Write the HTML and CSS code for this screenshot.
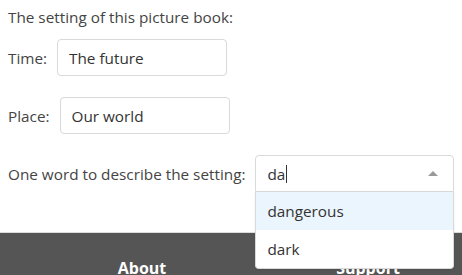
FILE: index.html
```html
<!DOCTYPE html>
<html lang="en">
<head>
    <meta charset="UTF-8">
    <title>Picture book setting</title>
    <link rel="stylesheet" href="styles.css">
</head>
<body>
    <div class="form">
        <p class="intro">The setting of this picture book:</p>
        <div class="row">
            <label for="time-input">Time:</label>
            <input type="text" id="time-input" class="text-input" value="The future">
        </div>
        <div class="row">
            <label for="place-input">Place:</label>
            <input type="text" id="place-input" class="text-input" value="Our world">
        </div>
        <div class="row">
            <label for="word-input">One word to describe the setting:</label>
            <div class="combo">
                <div class="combo-box" id="word-input">
                    <span class="combo-value">da</span><span class="caret"></span>
                    <span class="arrow"></span>
                </div>
                <ul class="combo-menu">
                    <li class="combo-option active">dangerous</li>
                    <li class="combo-option">dark</li>
                </ul>
            </div>
        </div>
    </div>
    <footer class="footer">
        <div class="footer-col">About</div>
        <div class="footer-col">Support</div>
    </footer>
</body>
</html>
```

FILE: styles.css
```css
body {
    margin: 0;
    font-family: "Open Sans", sans-serif;
    font-size: 15.3px;
    color: #444;
}
.form {
    padding: 6px 8px 40px 8px;
}
.intro {
    margin: 0 0 11px 0;
    line-height: 22px;
}
.row {
    display: flex;
    align-items: center;
    gap: 10px;
    margin-bottom: 21px;
}
.row:last-child {
    margin-bottom: 0;
}
.row label {
    white-space: nowrap;
}
.text-input {
    width: 170px;
    height: 37px;
    box-sizing: border-box;
    border: 1px solid #d9d9d9;
    border-radius: 4px;
    padding: 0 11px;
    font: inherit;
    color: #333;
}
.combo {
    position: relative;
    flex-shrink: 0;
}
.combo-box {
    width: 199px;
    height: 37px;
    box-sizing: border-box;
    border: 1px solid #d9d9d9;
    border-radius: 4px 4px 0 0;
    padding: 0 11px;
    display: flex;
    align-items: center;
    color: #333;
}
.caret {
    width: 1px;
    height: 18px;
    background: #333;
    margin-left: 1px;
}
.arrow {
    margin-left: auto;
    margin-right: 4px;
    border-left: 5px solid transparent;
    border-right: 5px solid transparent;
    border-bottom: 5px solid #999;
}
.combo-menu {
    position: absolute;
    top: 37px;
    left: 0;
    width: 199px;
    box-sizing: border-box;
    margin: 0;
    padding: 0;
    list-style: none;
    background: #fff;
    border: 1px solid #d9d9d9;
    border-top: none;
    border-radius: 0 0 4px 4px;
    box-shadow: 0 1px 2px rgba(0,0,0,0.1);
    z-index: 2;
}
.combo-option {
    height: 38px;
    line-height: 38px;
    padding: 0 11px;
    color: #333;
}
.combo-option.active {
    background: #ebf5fd;
}
.footer {
    background: #555;
    border-top: 1px solid #ddd;
    display: flex;
    gap: 46px;
    padding: 24px 4px 20px 52px;
    color: #fff;
    font-weight: bold;
    font-size: 16px;
}
.footer-col {
    flex: 1;
    text-align: center;
}
```
